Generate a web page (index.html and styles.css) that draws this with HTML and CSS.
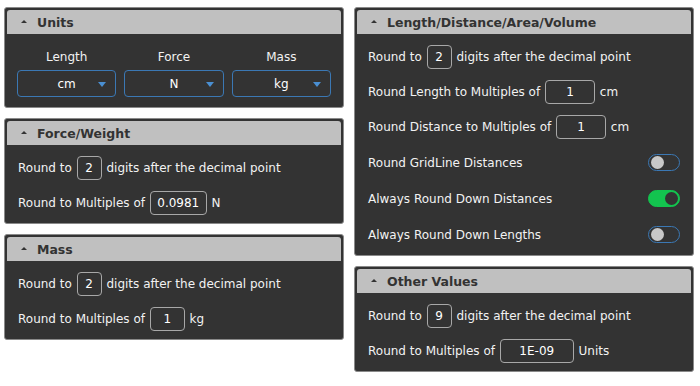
FILE: index.html
```html
<!DOCTYPE html>
<html>
<head>
    <title>Rounding Settings</title>
    <link rel="stylesheet" href="styles.css">
</head>
<body>

<div class="page">
    <div class="column">
        <!-- Units -->
        <div class="panel">
            <div class="panel-head"><span class="caret"></span>Units</div>
            <div class="panel-body units">
                <div class="unit">
                    <label>Length</label>
                    <div class="select">cm<span class="arrow"></span></div>
                </div>
                <div class="unit">
                    <label>Force</label>
                    <div class="select">N<span class="arrow"></span></div>
                </div>
                <div class="unit">
                    <label>Mass</label>
                    <div class="select">kg<span class="arrow"></span></div>
                </div>
            </div>
        </div>

        <!-- Force/Weight -->
        <div class="panel">
            <div class="panel-head"><span class="caret"></span>Force/Weight</div>
            <div class="panel-body">
                <div class="row">Round to <span class="field w-digits">2</span> digits after the decimal point</div>
                <div class="row">Round to Multiples of <span class="field w-force">0.0981</span> N</div>
            </div>
        </div>

        <!-- Mass -->
        <div class="panel">
            <div class="panel-head"><span class="caret"></span>Mass</div>
            <div class="panel-body">
                <div class="row">Round to <span class="field w-digits">2</span> digits after the decimal point</div>
                <div class="row">Round to Multiples of <span class="field w-mass">1</span> kg</div>
            </div>
        </div>
    </div>

    <div class="column">
        <!-- Length/Distance/Area/Volume -->
        <div class="panel">
            <div class="panel-head"><span class="caret"></span>Length/Distance/Area/Volume</div>
            <div class="panel-body">
                <div class="row">Round to <span class="field w-digits">2</span> digits after the decimal point</div>
                <div class="row">Round Length to Multiples of <span class="field w-len">1</span> cm</div>
                <div class="row">Round Distance to Multiples of <span class="field w-len">1</span> cm</div>
                <div class="row toggle-row">Round GridLine Distances <span class="toggle"></span></div>
                <div class="row toggle-row">Always Round Down Distances <span class="toggle on"></span></div>
                <div class="row toggle-row">Always Round Down Lengths <span class="toggle"></span></div>
            </div>
        </div>

        <!-- Other Values -->
        <div class="panel">
            <div class="panel-head"><span class="caret"></span>Other Values</div>
            <div class="panel-body">
                <div class="row">Round to <span class="field w-digits">9</span> digits after the decimal point</div>
                <div class="row">Round to Multiples of <span class="field w-other">1E-09</span> Units</div>
            </div>
        </div>
    </div>
</div>

</body>
</html>
```

FILE: styles.css
```css
body {
    margin: 0;
    background-color: #fff;
    font-family: "DejaVu Sans", Verdana, sans-serif;
    font-size: 12px;
    color: #f2f2f2;
}
.page {
    display: flex;
    gap: 10px;
    padding: 7px 0 0 4px;
}
.column {
    width: 340px;
    display: flex;
    flex-direction: column;
    gap: 10px;
}
.panel {
    background-color: #333;
    border: 1px solid #8a8a8a;
    border-radius: 3px;
    padding: 2px;
}
.panel-head {
    height: 24px;
    display: flex;
    align-items: center;
    padding-left: 14px;
    background-color: #c0c0c0;
    border-radius: 3px 3px 0 0;
    color: #333;
    font-weight: bold;
    font-size: 12.5px;
}
.caret {
    width: 0;
    height: 0;
    border-left: 3.5px solid transparent;
    border-right: 3.5px solid transparent;
    border-bottom: 3px solid #333;
    margin-right: 10px;
    margin-top: -1px;
}
.panel-body {
    padding: 11px 11px 6px 11px;
}
.row {
    height: 24px;
    display: flex;
    align-items: center;
    white-space: pre;
    margin-bottom: 11px;
}
.row:last-child {
    margin-bottom: 0;
}
.toggle-row {
    height: 25px;
    justify-content: space-between;
}
.field {
    box-sizing: border-box;
    height: 24px;
    margin: 0 1px;
    border: 1px solid #a8a8a8;
    border-radius: 4px;
    display: flex;
    align-items: center;
    justify-content: center;
    color: #fff;
}
.w-digits { width: 25px; }
.w-force { width: 57px; }
.w-mass { width: 35px; }
.w-len { width: 50px; }
.w-other { width: 74px; }

/* Units selector row */
.units {
    display: grid;
    grid-template-columns: 1fr 1fr 1fr;
    gap: 8px;
    padding: 15px 10px 8px 10px;
}
.unit label {
    display: block;
    text-align: center;
    line-height: 16px;
    margin-bottom: 5px;
}
.select {
    position: relative;
    box-sizing: border-box;
    height: 27px;
    border: 1px solid #3b78b4;
    border-radius: 4px;
    display: flex;
    align-items: center;
    justify-content: center;
    color: #fff;
}
.arrow {
    position: absolute;
    right: 9px;
    top: 11px;
    width: 0;
    height: 0;
    border-left: 4px solid transparent;
    border-right: 4px solid transparent;
    border-top: 5px solid #4a8fd2;
}

/* Toggle switches */
.toggle {
    position: relative;
    box-sizing: border-box;
    width: 32px;
    height: 17px;
    border: 1px solid #3b78b4;
    border-radius: 9px;
}
.toggle::after {
    content: "";
    position: absolute;
    left: 2px;
    top: 1px;
    width: 13px;
    height: 13px;
    border-radius: 50%;
    background-color: #c8c8c8;
}
.toggle.on {
    background-color: #13c44f;
    border-color: #13c44f;
}
.toggle.on::after {
    left: auto;
    right: 1px;
    background-color: #333;
}
```
